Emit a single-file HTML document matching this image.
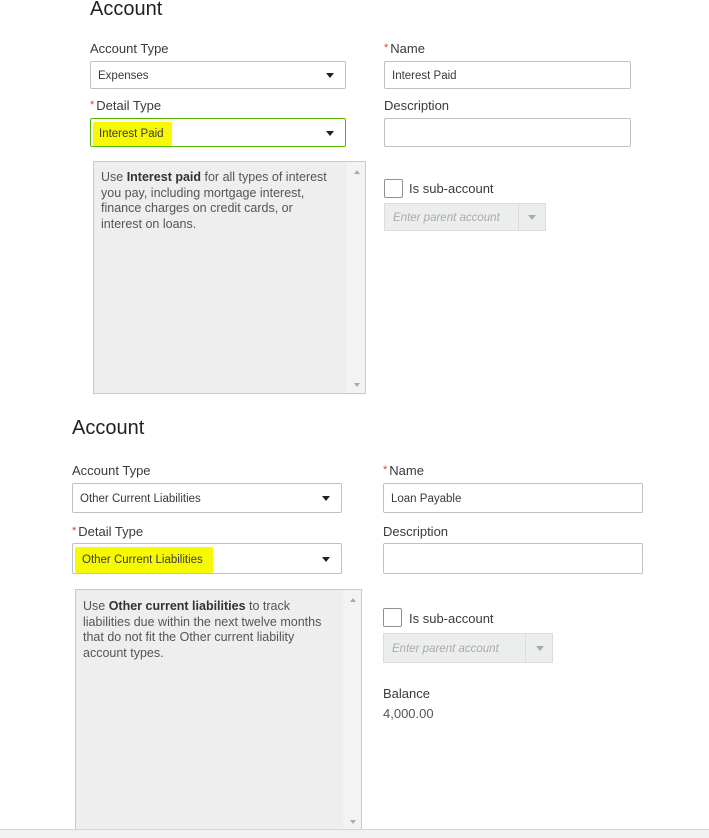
<!DOCTYPE html>
<html><head><meta charset="utf-8"><style>
*{box-sizing:border-box;margin:0;padding:0}
html,body{width:709px;height:838px;overflow:hidden}
body{background:#fff;position:relative;font-family:"Liberation Sans",sans-serif;color:#393a3d}
.a{position:absolute}
.t{font-size:20px;color:#222;font-weight:500}
.l{font-size:13px;color:#393a3d;line-height:15px}
.l b{color:#e4412b;font-weight:normal;font-size:11px;vertical-align:top;margin-right:2px}
.box{position:absolute;border:1px solid #bfc1c3;border-radius:2px;background:#fff;font-size:11.5px;color:#393a3d;display:flex;align-items:center;padding-left:7px;padding-top:2px}
.arr{position:absolute;right:11px;top:50%;margin-top:-2px;width:0;height:0;border-left:4px solid transparent;border-right:4px solid transparent;border-top:5px solid #222}
.hl{background:#f6f900;padding:5px 6px;margin-left:-5px;border-radius:2px}
.ta{position:absolute;background:#eeeeee;border:1px solid #c9c9c9;font-size:12.5px;color:#555;line-height:15.5px;padding:7px 30px 7px 7px}
.ta b{color:#333}
.ta .sb{position:absolute;right:0;top:0;bottom:0;width:18px;background:#f3f3f3}
.up{position:absolute;right:5px;top:8px;border-left:3px solid transparent;border-right:3px solid transparent;border-bottom:4px solid #aaa}
.dn{position:absolute;right:5px;bottom:6px;border-left:3px solid transparent;border-right:3px solid transparent;border-top:4px solid #aaa}
.cb{position:absolute;width:19px;height:19px;border:1px solid #8d9096;border-radius:2px;background:#fff}
.par{position:absolute;background:#eceeee;border:1px solid #dcdcdc;font-size:11.5px;font-style:italic;color:#aaa;display:flex;align-items:center;padding-left:8px;padding-top:2px}
.par .d{position:absolute;top:0;bottom:0;border-left:1px solid #dcdcdc}
.par .ar{position:absolute;top:50%;margin-top:-2px;border-left:4px solid transparent;border-right:4px solid transparent;border-top:5px solid #aaa}
</style></head><body>
<div class="a t" style="left:90px;top:-2px">Account</div>
<div class="a l" style="left:90px;top:41px">Account Type</div>
<div class="box" style="left:90px;top:61px;width:256px;height:28px">Expenses<span class="arr"></span></div>
<div class="a l" style="left:90px;top:98px"><b>*</b>Detail Type</div>
<div class="box" style="left:90px;top:118px;width:256px;height:29px;border-color:#53b700"><span class="hl" style="padding:6px 8px 6px 6px">Interest Paid</span><span class="arr"></span></div>
<div class="ta" style="left:93px;top:161px;width:273px;height:233px;padding-top:8px">Use <b>Interest paid</b> for all types of interest you pay, including mortgage interest, finance charges on credit cards, or interest on loans.<span class="sb"></span><span class="up"></span><span class="dn"></span></div>
<div class="a l" style="left:384px;top:41px"><b>*</b>Name</div>
<div class="box" style="left:384px;top:61px;width:247px;height:28px">Interest Paid</div>
<div class="a l" style="left:384px;top:98px">Description</div>
<div class="box" style="left:384px;top:118px;width:247px;height:29px"></div>
<div class="cb" style="left:384px;top:179px"></div>
<div class="a l" style="left:409px;top:181px">Is sub-account</div>
<div class="par" style="left:384px;top:203px;width:162px;height:28px">Enter parent account<span class="d" style="left:133px"></span><span class="ar" style="left:143px"></span></div>

<div class="a t" style="left:72px;top:417px">Account</div>
<div class="a l" style="left:72px;top:463px">Account Type</div>
<div class="box" style="left:72px;top:483px;width:270px;height:30px">Other Current Liabilities<span class="arr"></span></div>
<div class="a l" style="left:72px;top:524px"><b>*</b>Detail Type</div>
<div class="box" style="left:72px;top:543px;width:270px;height:31px"><span class="hl" style="padding:7px 10px 7px 7px">Other Current Liabilities</span><span class="arr"></span></div>
<div class="ta" style="left:75px;top:589px;width:287px;height:245px;padding-top:9px">Use <b>Other current liabilities</b> to track liabilities due within the next twelve months that do not fit the Other current liability account types.<span class="sb"></span><span class="up"></span><span class="dn" style="bottom:9px"></span></div>
<div class="a l" style="left:383px;top:463px"><b>*</b>Name</div>
<div class="box" style="left:383px;top:483px;width:260px;height:30px">Loan Payable</div>
<div class="a l" style="left:383px;top:524px">Description</div>
<div class="box" style="left:383px;top:543px;width:260px;height:31px"></div>
<div class="cb" style="left:383px;top:608px"></div>
<div class="a l" style="left:409px;top:611px">Is sub-account</div>
<div class="par" style="left:383px;top:633px;width:170px;height:30px">Enter parent account<span class="d" style="left:141px"></span><span class="ar" style="left:152px"></span></div>
<div class="a l" style="left:383px;top:686px">Balance</div>
<div class="a l" style="left:383px;top:706px;color:#555">4,000.00</div>
<div class="a" style="left:0;top:829px;width:709px;height:9px;background:#f1f1f1;border-top:1px solid #d6d6d6;z-index:5"></div>
</body></html>
